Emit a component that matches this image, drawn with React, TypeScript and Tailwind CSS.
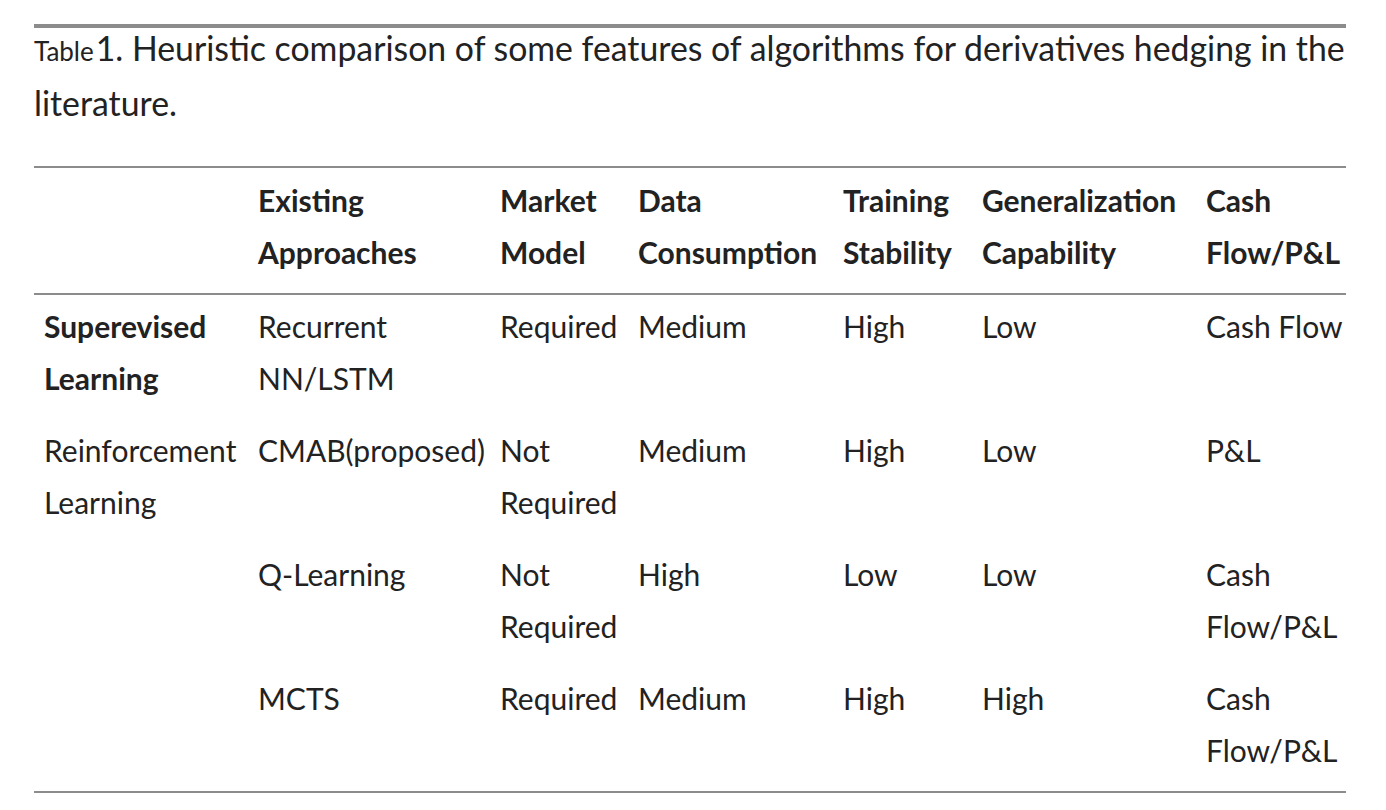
const rows: { label?: string; bold?: boolean; cells: string[][] }[] = [
  {
    label: 'Superevised\nLearning',
    bold: true,
    cells: [['Recurrent', 'NN/LSTM'], ['Required'], ['Medium'], ['High'], ['Low'], ['Cash Flow']],
  },
  {
    label: 'Reinforcement\nLearning',
    cells: [['CMAB(proposed)'], ['Not', 'Required'], ['Medium'], ['High'], ['Low'], ['P&L']],
  },
  {
    cells: [['Q-Learning'], ['Not', 'Required'], ['High'], ['Low'], ['Low'], ['Cash', 'Flow/P&L']],
  },
  {
    cells: [['MCTS'], ['Required'], ['Medium'], ['High'], ['High'], ['Cash', 'Flow/P&L']],
  },
];

const headers = [
  [''],
  ['Existing', 'Approaches'],
  ['Market', 'Model'],
  ['Data', 'Consumption'],
  ['Training', 'Stability'],
  ['Generalization', 'Capability'],
  ['Cash', 'Flow/P&L'],
];

const grid = 'grid grid-cols-[214px_242px_138px_205px_139px_224px_150px]';

function Lines({ lines }: { lines: string[] }) {
  return (
    <>
      {lines.map((l, i) => (
        <div key={i} className="whitespace-nowrap">
          {l || '\u00a0'}
        </div>
      ))}
    </>
  );
}

export default function App() {
  return (
    <div className="min-h-screen bg-white text-[#222] font-['Lato',sans-serif] text-[30px] leading-[52px]">
      <div className="ml-[34px] w-[1312px] pt-[24px]">
        <div className="h-[4px] bg-[#8c8c8c]" />

        {/* caption */}
        <p className="-mt-[6px] text-[33.8px] whitespace-nowrap">
          <span className="text-[26px]">Table</span>
          <span className="ml-[2px]">1. Heuristic comparison of some features of algorithms for derivatives hedging in the</span>
          <br />
          literature.
        </p>

        <div className="mt-[37px] border-t-2 border-b-2 border-[#8c8c8c]">
          <div className={`${grid} border-b-2 border-[#8c8c8c] font-bold`}>
            {headers.map((h, i) => (
              <div key={i} className="pl-[10px] pt-[6px] pb-[15px]">
                <Lines lines={h} />
              </div>
            ))}
          </div>

          {rows.map((r, ri) => (
            <div key={ri} className={grid}>
              <div className={`pl-[10px] pt-[5px] pb-[15px] ${r.bold ? 'font-bold' : ''}`}>
                {r.label ? <Lines lines={r.label.split('\n')} /> : null}
              </div>
              {r.cells.map((c, ci) => (
                <div key={ci} className="pl-[10px] pt-[5px] pb-[15px]">
                  <Lines lines={c} />
                </div>
              ))}
            </div>
          ))}
        </div>
      </div>
    </div>
  );
}
